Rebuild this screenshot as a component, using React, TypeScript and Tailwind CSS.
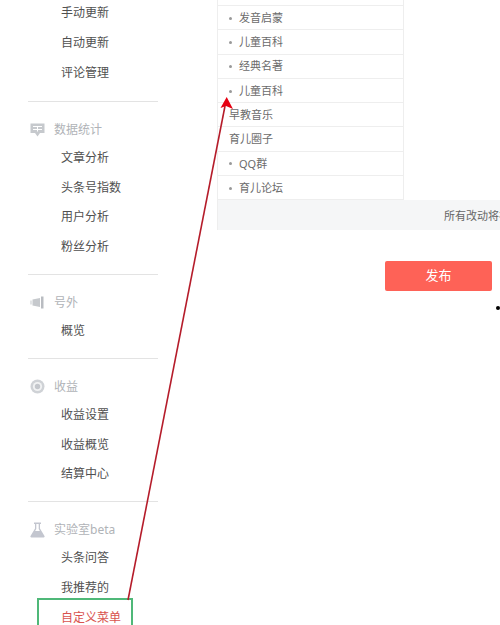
import type { ReactNode } from 'react';

const FONT = "font-['Noto_Sans','Noto_Sans_CJK_SC',sans-serif]";

const ChatIcon = () => (
  <svg width="15" height="14" viewBox="0 0 15 14">
    <path d="M0.500 0.500h14v9.500H10L7.500 13.500 5 10H0.500z" fill="#c6c9cd" />
    <path d="M3 3.500h9M3 6.500h9" stroke="#fff" strokeWidth="1.100" />
    <path d="M7.500 3.500v5" stroke="#fff" strokeWidth="1" />
  </svg>
);

const HornIcon = () => (
  <svg width="15" height="13" viewBox="0 0 15 13">
    <path d="M0.500 4.500h1v4h-1z" fill="#c6c9cd" />
    <path d="M2.500 3.500 10 2v9L2.500 9.500z" fill="#c6c9cd" />
    <path d="M11 0.500h2.500v12H11z" fill="#b9bcc1" />
  </svg>
);

const CoinIcon = () => (
  <svg width="15" height="15" viewBox="0 0 15 15">
    <circle cx="7.500" cy="7.500" r="7" fill="#cfd2d6" />
    <circle cx="7.500" cy="7.500" r="4.600" fill="#f1f2f3" />
    <circle cx="7.500" cy="7.500" r="2.700" fill="#c4c7cc" />
  </svg>
);

const FlaskIcon = () => (
  <svg width="15" height="16" viewBox="0 0 15 16">
    <path d="M4 0.500h7v1.500H10v4.500l4.500 7.500a1 1 0 0 1-.9 1.500H1.400a1 1 0 0 1-.9-1.500L5 6.500V2H4z" fill="#c3c6cf" />
    <path d="M6.300 2h2.400v5l1.200 2H5.100l1.200-2z" fill="#fff" />
  </svg>
);

function NavItem({ label, active }: { label: string; active?: boolean }) {
  return (
    <div className={`flex h-[29.7px] items-center pl-[33px] pt-[1px] text-[12px] ${active ? 'text-[#d9534f]' : 'text-[#505050]'}`}>
      {label}
    </div>
  );
}

function NavGroup({ icon, title, items, active }: { icon: ReactNode; title: string; items: string[]; active?: string }) {
  return (
    <div className="border-t border-[#e3e3e3] pt-[13.5px] pb-[12.8px]">
      <div className="flex h-[27px] items-center pt-[1px] text-[12px] text-[#b0b3b7]">
        <span className="flex w-[26px] justify-start pl-[2px]">{icon}</span>
        {title}
      </div>
      {items.map((item) => (
        <NavItem key={item} label={item} active={item === active} />
      ))}
    </div>
  );
}

function Row({ label, dot = true }: { label: string; dot?: boolean }) {
  return (
    <div className="flex h-[24.3px] items-center border-b border-[#eeeeee] pt-[1px] text-[11px] text-[#6b6b6b]">
      {dot && <span className="ml-[11px] mr-[7px] h-[3px] w-[3px] rounded-full bg-[#999]" />}
      <span className={dot ? '' : 'ml-[11px]'}>{label}</span>
    </div>
  );
}

export default function App() {
  return (
    <div className={`relative flex h-[625px] w-[500px] overflow-hidden bg-white ${FONT}`}>
      {/* sidebar */}
      <div className="ml-[28px] w-[130px] shrink-0">
        <div className="-mt-[2px] pb-[14px]">
          <NavItem label="手动更新" />
          <NavItem label="自动更新" />
          <NavItem label="评论管理" />
        </div>
        <NavGroup icon={<ChatIcon />} title="数据统计" items={['文章分析', '头条号指数', '用户分析', '粉丝分析']} />
        <NavGroup icon={<HornIcon />} title="号外" items={['概览']} />
        <NavGroup icon={<CoinIcon />} title="收益" items={['收益设置', '收益概览', '结算中心']} />
        <NavGroup icon={<FlaskIcon />} title="实验室beta" items={['头条问答', '我推荐的', '自定义菜单']} active="自定义菜单" />
      </div>

      {/* main */}
      <div className="ml-[59px] flex-1">
        <div className="border-l border-[#eeeeee]">
          <div className="w-[186px] border-r border-[#eeeeee]">
            <div className="h-[6px] border-b border-[#eeeeee]" />
            <Row label="发音启蒙" />
            <Row label="儿童百科" />
            <Row label="经典名著" />
            <Row label="儿童百科" />
            <Row label="早教音乐" dot={false} />
            <Row label="育儿圈子" dot={false} />
            <Row label="QQ群" />
            <Row label="育儿论坛" />
          </div>
          <div className="flex h-[30px] items-center whitespace-nowrap bg-[#f5f6f7] pl-[226px] pt-[1px] text-[11px] text-[#666]">
            所有改动将在
          </div>
        </div>
        <button className="ml-[168px] mt-[31px] flex h-[30px] w-[107px] items-center justify-center rounded-[2px] bg-[#fe6257] pb-[2px] text-[13px] text-white">
          发布
        </button>
      </div>

      {/* stray dot */}
      <span className="absolute left-[496px] top-[306px] h-[4px] w-[4px] rounded-full bg-black" />

      {/* green highlight box */}
      <div className="absolute left-[37px] top-[598px] h-[40px] w-[96px] border-2 border-[#4fb878]" />

      {/* red annotation arrow */}
      <svg className="absolute left-0 top-0" width="500" height="625" viewBox="0 0 500 625">
        <line x1="128" y1="600" x2="225" y2="106" stroke="#b51c2a" strokeWidth="1.600" />
        <path d="M226.700 97 L233 109 L226 106 L220.500 108z" fill="#e60012" />
      </svg>
    </div>
  );
}
